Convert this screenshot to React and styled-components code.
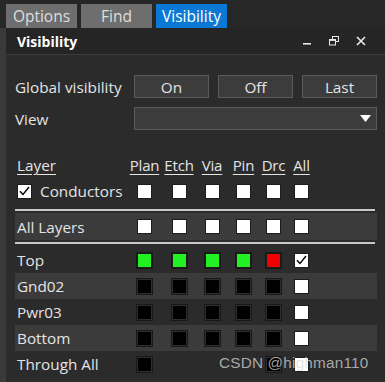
import React from "react";
import styled, { createGlobalStyle } from "styled-components";

const GlobalStyle = createGlobalStyle`
  html, body {
    margin: 0;
    padding: 0;
    background: #2b2b2b;
  }
  body {
    font-family: "Open Sans", "Noto Sans", sans-serif;
    color: #e4e4e4;
  }
`;

const StyledWindow = styled.div`
  position: relative;
  width: 385px;
  height: 382px;
  overflow: hidden;
  display: flex;
  flex-direction: column;
  background: #2b2b2b;
`;
const StyledTabBar = styled.div`
  display: flex;
  gap: 4px;
  padding: 4px 0 0 6px;
  background: #272727;
`;
const StyledTab = styled.div`
  width: 71px;
  height: 24px;
  display: flex;
  align-items: center;
  justify-content: center;
  font-size: 15.5px;
  color: ${(p) => (p.$active ? "#ffffff" : "#dedede")};
  background: ${(p) => (p.$active ? "#0a78d4" : "#6e6e6e")};
`;
const StyledBody = styled.div`
  flex: 1;
  display: flex;
`;
const StyledLeftStrip = styled.div`
  width: 6px;
  background: #3a3a3a;
`;
const StyledPanel = styled.div`
  flex: 1;
  display: flex;
  flex-direction: column;
  background: #2b2b2b;
`;
const StyledTitleBar = styled.div`
  height: 26px;
  display: flex;
  align-items: center;
  justify-content: space-between;
  padding: 0 19px 0 11px;
  background: #252525;
  border-bottom: 1px solid #3c3c3c;
`;
const StyledTitle = styled.div`
  font-size: 14px;
  font-weight: 700;
  color: #ffffff;
`;
const StyledTitleIcons = styled.div`
  display: flex;
  align-items: center;
  gap: 17px;
  color: #e8e8e8;
  svg {
    display: block;
  }
`;
const StyledContent = styled.div`
  padding: 20px 0 0 9px;
`;
const StyledFormRow = styled.div`
  display: flex;
  align-items: center;
  height: 23px;
  margin-bottom: ${(p) => p.$gap || 0}px;
`;
const StyledFormLabel = styled.div`
  width: 119px;
  font-size: 15.3px;
`;
const StyledButtons = styled.div`
  display: flex;
  gap: 9px;
`;
const StyledButton = styled.div`
  width: 73px;
  height: 21px;
  display: flex;
  align-items: center;
  justify-content: center;
  font-size: 15.3px;
  background: #3c3c3c;
  border: 1px solid #5a5a5a;
`;
const StyledSelect = styled.div`
  width: 236px;
  height: 21px;
  display: flex;
  align-items: center;
  justify-content: flex-end;
  padding-right: 5px;
  box-sizing: content-box;
  background: #3c3c3c;
  border: 1px solid #5a5a5a;
`;
const StyledGrid = styled.div`
  display: grid;
  grid-template-columns: 112px 35px 34px 32px 31px 29px 27px 1fr;
  align-items: center;
  width: 362px;
  height: ${(p) => p.$h || 26}px;
  background: ${(p) => (p.$shade ? "#3b3b3b" : "transparent")};
  font-size: 15.3px;
`;
const StyledHeaderCell = styled.div`
  text-align: center;
  text-decoration: underline;
  text-underline-offset: 3px;
  font-size: 15px;
  letter-spacing: -0.2px;
`;
const StyledLayerHead = styled.div`
  padding-left: 2px;
  text-decoration: underline;
  text-underline-offset: 3px;
`;
const StyledRowLabel = styled.div`
  padding-left: 2px;
  display: flex;
  align-items: center;
  gap: 8px;
`;
const StyledCell = styled.div`
  display: flex;
  justify-content: center;
`;
const boxColors = {
  white: "#ffffff",
  black: "#000000",
  green: "#22f022",
  red: "#f00000",
};
const StyledBox = styled.div`
  width: 13px;
  height: 13px;
  display: flex;
  align-items: center;
  justify-content: center;
  background: ${(p) => boxColors[p.$kind]};
  border: 1px solid ${(p) => (p.$kind === "black" ? "#2e2e2e" : "#1c1c1c")};
  outline: ${(p) => (p.$kind === "white" ? "none" : "1px solid #181818")};
`;
const StyledSeparator = styled.div`
  width: 360px;
  height: 2px;
  background: #c8c8c8;
  margin: ${(p) => p.$m || "0"};
`;
const StyledWatermark = styled.div`
  position: absolute;
  left: 219px;
  top: 354px;
  font-family: "Liberation Sans", Arial, sans-serif;
  font-size: 15.3px;
  color: rgba(220, 220, 220, 0.72);
  letter-spacing: 0.2px;
`;

const Check = () => (
  <svg width="11" height="10" viewBox="0 0 11 10">
    <path d="M1 5.2 L4 8.5 L10 1" fill="none" stroke="#000" strokeWidth="1.4" />
  </svg>
);

const Box = ({ kind, checked }) => (
  <StyledBox $kind={kind}>{checked && <Check />}</StyledBox>
);

const COLUMNS = ["Plan", "Etch", "Via", "Pin", "Drc", "All"];

const LAYERS = [
  { name: "Top", boxes: ["green", "green", "green", "green", "red"], checked: true },
  { name: "Gnd02", boxes: ["black", "black", "black", "black", "black"], shade: true },
  { name: "Pwr03", boxes: ["black", "black", "black", "black", "black"] },
  { name: "Bottom", boxes: ["black", "black", "black", "black", "black"], shade: true },
  { name: "Through All", boxes: ["black"], through: true },
];

const WhiteRow = () =>
  COLUMNS.map((c) => (
    <StyledCell key={c}>
      <Box kind="white" />
    </StyledCell>
  ));

const App = () => (
  <>
    <GlobalStyle />
    <StyledWindow>
      <StyledTabBar>
        <StyledTab>Options</StyledTab>
        <StyledTab>Find</StyledTab>
        <StyledTab $active>Visibility</StyledTab>
      </StyledTabBar>
      <StyledBody>
        <StyledLeftStrip />
        <StyledPanel>
          <StyledTitleBar>
            <StyledTitle>Visibility</StyledTitle>
            <StyledTitleIcons>
              <svg width="10" height="10" viewBox="0 0 10 10">
                <rect x="1" y="7" width="8" height="1.6" fill="currentColor" />
              </svg>
              <svg width="10" height="10" viewBox="0 0 10 10">
                <rect x="3.5" y="0.5" width="6" height="5" fill="none" stroke="currentColor" />
                <rect x="0.5" y="3.5" width="6" height="5.5" fill="#252525" stroke="currentColor" />
                <rect x="0.5" y="3.5" width="6" height="1.4" fill="currentColor" />
              </svg>
              <svg width="10" height="10" viewBox="0 0 10 10">
                <path d="M1 1 L9 9 M9 1 L1 9" stroke="currentColor" strokeWidth="1.7" />
              </svg>
            </StyledTitleIcons>
          </StyledTitleBar>
          <StyledContent>
            <StyledFormRow $gap={9}>
              <StyledFormLabel>Global visibility</StyledFormLabel>
              <StyledButtons>
                <StyledButton>On</StyledButton>
                <StyledButton>Off</StyledButton>
                <StyledButton>Last</StyledButton>
              </StyledButtons>
            </StyledFormRow>
            <StyledFormRow $gap={22}>
              <StyledFormLabel>View</StyledFormLabel>
              <StyledSelect>
                <svg width="11" height="8" viewBox="0 0 11 8">
                  <path d="M0 0 L11 0 L5.5 7 Z" fill="#ffffff" />
                </svg>
              </StyledSelect>
            </StyledFormRow>
            <StyledGrid $h={26}>
              <StyledLayerHead>Layer</StyledLayerHead>
              {COLUMNS.map((c) => (
                <StyledHeaderCell key={c}>{c}</StyledHeaderCell>
              ))}
            </StyledGrid>
            <StyledGrid $h={26}>
              <StyledRowLabel>
                <Box kind="white" checked />
                Conductors
              </StyledRowLabel>
              <WhiteRow />
            </StyledGrid>
            <StyledSeparator $m="5px 0 2px 0" />
            <StyledGrid $shade $h={27}>
              <StyledRowLabel>All Layers</StyledRowLabel>
              <WhiteRow />
            </StyledGrid>
            <StyledSeparator $m="2px 0 3px 0" />
            {LAYERS.map((layer) => (
              <StyledGrid key={layer.name} $shade={layer.shade}>
                <StyledRowLabel>{layer.name}</StyledRowLabel>
                {layer.boxes.map((k, i) => (
                  <StyledCell key={i}>
                    <Box kind={k} />
                  </StyledCell>
                ))}
                {layer.through ? (
                  <>
                    <div />
                    <div />
                    <div />
                    <StyledCell>
                      <Box kind="black" />
                    </StyledCell>
                    <StyledCell>
                      <Box kind="white" />
                    </StyledCell>
                  </>
                ) : (
                  <StyledCell>
                    <Box kind="white" checked={layer.checked} />
                  </StyledCell>
                )}
              </StyledGrid>
            ))}
          </StyledContent>
        </StyledPanel>
      </StyledBody>
      <StyledWatermark>CSDN @highman110</StyledWatermark>
    </StyledWindow>
  </>
);

export default App;
